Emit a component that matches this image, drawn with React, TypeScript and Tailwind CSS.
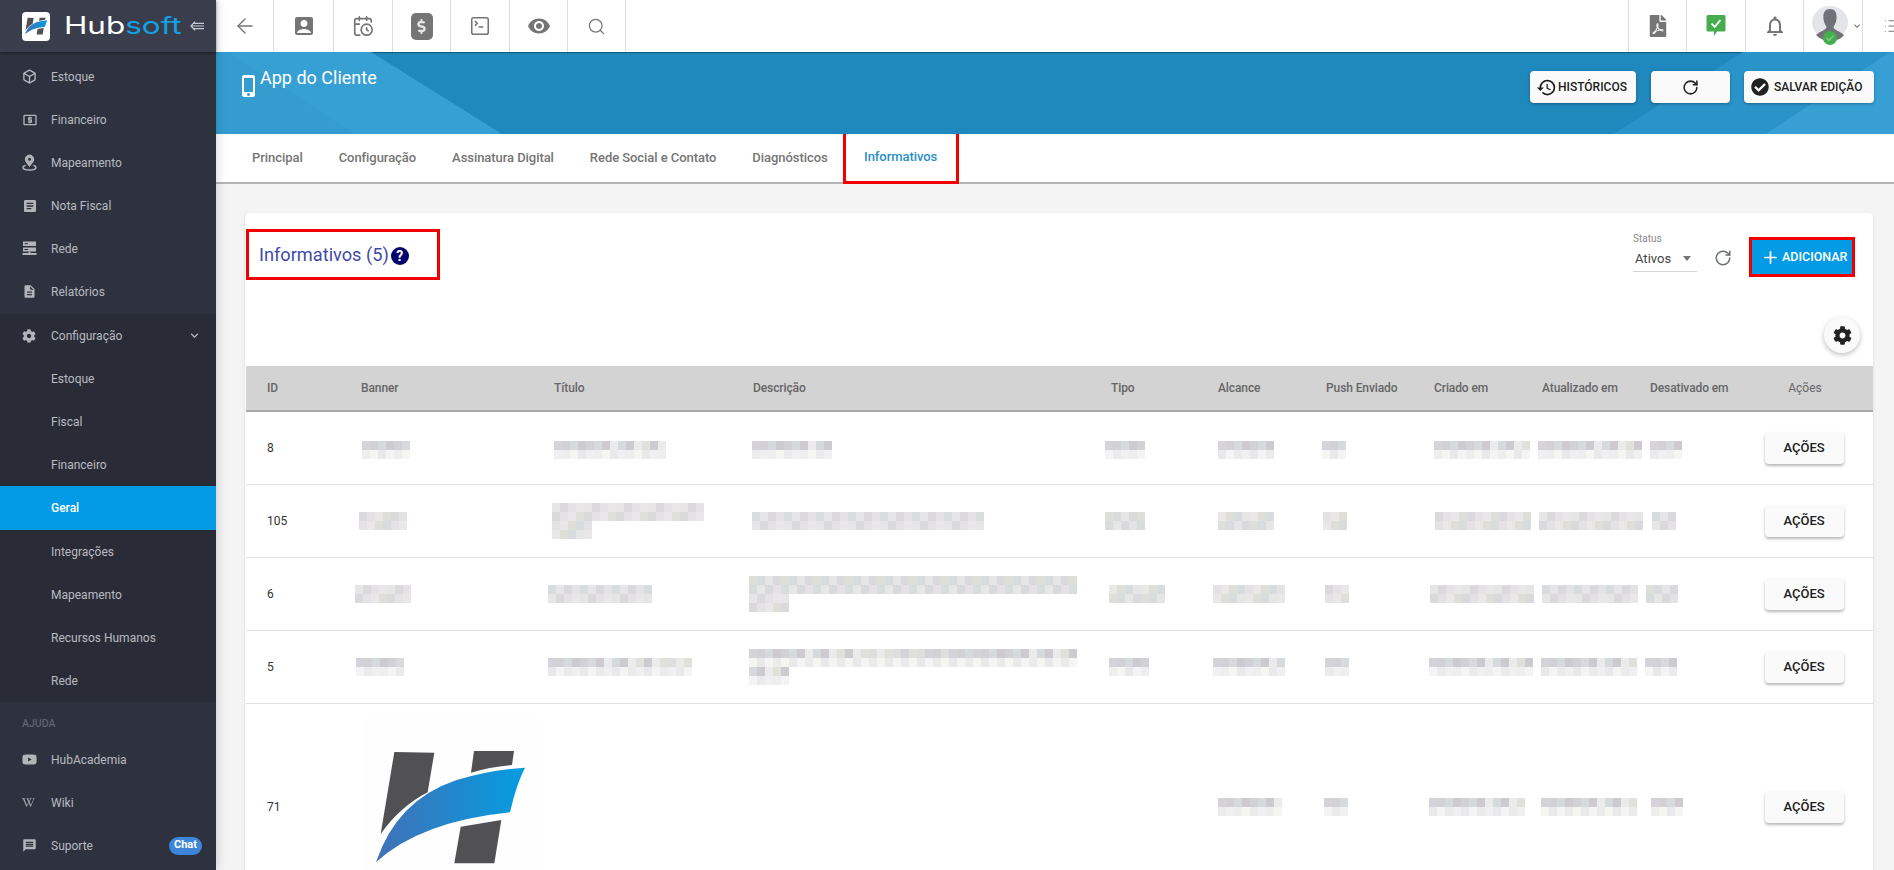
import React from "react";
import {
  MdAccountBox,
  MdArticle,
  MdDescription,
  MdExpandMore,
  MdHistory,
  MdLocalAtm,
  MdMessage,
  MdOutlineNotifications,
  MdPhoneIphone,
  MdVisibility,
} from "react-icons/md";
import { FaCheckCircle, FaCog, FaDollarSign, FaFilePdf, FaWikipediaW, FaYoutube } from "react-icons/fa";
import { ArrowLeft, Box, CalendarClock, List, Plus, RotateCw, Search, SquareTerminal } from "lucide-react";

// --- Data ---

type NavItem = { label: string; icon?: React.ReactNode; badge?: string; active?: boolean };

const iconClass = "text-[15px]";

function PinIcon() {
  return (
    <svg className="h-[17px] w-[15px]" viewBox="0 0 15 17" fill="none" stroke="currentColor">
      <path d="M7.5 1 A4.2 4.2 0 0 1 11.7 5.2 C11.7 8 9 10 7.5 12.5 C6 10 3.3 8 3.3 5.2 A4.2 4.2 0 0 1 7.5 1 Z" fill="currentColor" />
      <circle cx="7.5" cy="5.2" r="1.5" fill="#2e323f" stroke="none" />
      <path d="M3.6 11.2 C1.8 11.8 1 12.6 1 13.5 C1 15 3.8 16 7.5 16 C11.2 16 14 15 14 13.5 C14 12.6 13.2 11.8 11.4 11.2" strokeWidth="1.5" />
    </svg>
  );
}

function ServerIcon() {
  return (
    <svg className="h-[15px] w-[15px]" viewBox="0 0 15 15">
      <path d="M1 0.5 H14 V5 H1 Z M1 6.5 H14 V10.5 H1 Z" fill="currentColor" />
      <path d="M6.5 10.5 H8.5 V12 H14.5 V14 H0.5 V12 H6.5 Z" fill="currentColor" />
      <path d="M2.5 2.7 H6 M2.5 8.5 H6" stroke="#2e323f" strokeWidth="1" />
    </svg>
  );
}

const MAIN_NAV: NavItem[] = [
  { label: "Estoque", icon: <Box className="h-[15px] w-[15px]" strokeWidth={2.2} /> },
  { label: "Financeiro", icon: <MdLocalAtm className="text-[16px]" /> },
  { label: "Mapeamento", icon: <PinIcon /> },
  { label: "Nota Fiscal", icon: <MdArticle className="text-[16px]" /> },
  { label: "Rede", icon: <ServerIcon /> },
  { label: "Relatórios", icon: <MdDescription className={iconClass} /> },
];

const CONFIG_NAV: NavItem[] = [
  { label: "Estoque" },
  { label: "Fiscal" },
  { label: "Financeiro" },
  { label: "Geral", active: true },
  { label: "Integrações" },
  { label: "Mapeamento" },
  { label: "Recursos Humanos" },
  { label: "Rede" },
];

const HELP_NAV: NavItem[] = [
  { label: "HubAcademia", icon: <FaYoutube className="text-[15px]" /> },
  { label: "Wiki", icon: <FaWikipediaW className="text-[13px]" /> },
  { label: "Suporte", icon: <MdMessage className={iconClass} />, badge: "Chat" },
];

const TABS = ["Principal", "Configuração", "Assinatura Digital", "Rede Social e Contato", "Diagnósticos"];

const COLUMNS = [
  { label: "ID", width: "w-[94px]" },
  { label: "Banner", width: "w-[193px]" },
  { label: "Título", width: "w-[199px]" },
  { label: "Descrição", width: "w-[358px]" },
  { label: "Tipo", width: "w-[107px]" },
  { label: "Alcance", width: "w-[108px]" },
  { label: "Push Enviado", width: "w-[108px]" },
  { label: "Criado em", width: "w-[108px]" },
  { label: "Atualizado em", width: "w-[108px]" },
  { label: "Desativado em", width: "w-[108px]" },
];

// where the text of each column starts, the censored blocks are placed from it
const COLUMN_X = [361, 554, 753, 1111, 1218, 1326, 1434, 1542, 1650];

type Block = { x: number; tiers: number[] } | null;
type Row = { id: string; height: string; soft?: boolean; dy?: number; blocks: Block[]; logo?: boolean };

const ROWS: Row[] = [
  {
    id: "8",
    height: "h-[73px]",
    dy: 5,
    blocks: [
      { x: 362, tiers: [48, 48] },
      { x: 554, tiers: [112, 112] },
      { x: 752, tiers: [74, 74] },
      { x: 1105, tiers: [33, 33] },
      { x: 1218, tiers: [56, 56] },
      { x: 1322, tiers: [24, 24] },
      { x: 1434, tiers: [96, 96] },
      { x: 1538, tiers: [103, 103] },
      { x: 1650, tiers: [32, 32] },
    ],
  },
  {
    id: "105",
    height: "h-[73px]",
    soft: true,
    blocks: [
      { x: 359, tiers: [48, 48] },
      { x: 552, tiers: [152, 152, 40, 40] },
      { x: 752, tiers: [232, 232] },
      { x: 1105, tiers: [40, 40] },
      { x: 1218, tiers: [56, 56] },
      { x: 1323, tiers: [24, 24] },
      { x: 1435, tiers: [96, 96] },
      { x: 1539, tiers: [97, 97] },
      { x: 1652, tiers: [24, 24] },
    ],
  },
  {
    id: "6",
    height: "h-[73px]",
    soft: true,
    blocks: [
      { x: 355, tiers: [56, 56] },
      { x: 548, tiers: [104, 104] },
      { x: 749, tiers: [321, 321, 40, 40] },
      { x: 1109, tiers: [56, 56] },
      { x: 1213, tiers: [72, 72] },
      { x: 1325, tiers: [24, 24] },
      { x: 1430, tiers: [104, 104] },
      { x: 1542, tiers: [96, 96] },
      { x: 1646, tiers: [32, 32] },
    ],
  },
  {
    id: "5",
    height: "h-[73px]",
    blocks: [
      { x: 356, tiers: [48, 48] },
      { x: 548, tiers: [144, 144] },
      { x: 749, tiers: [327, 327, 40, 40] },
      { x: 1109, tiers: [40, 40] },
      { x: 1213, tiers: [72, 72] },
      { x: 1325, tiers: [24, 24] },
      { x: 1429, tiers: [104, 104] },
      { x: 1541, tiers: [96, 96] },
      { x: 1645, tiers: [32, 32] },
    ],
  },
  {
    id: "71",
    height: "h-[207px]",
    logo: true,
    blocks: [
      null,
      null,
      null,
      null,
      { x: 1218, tiers: [64, 64] },
      { x: 1324, tiers: [24, 24] },
      { x: 1429, tiers: [96, 96] },
      { x: 1541, tiers: [96, 96] },
      { x: 1651, tiers: [27, 27] },
    ],
  },
];

const DARK_TONES = ["#d5d3d9", "#cdcbd0", "#dedede", "#d7dadd", "#e1e1dc", "#d2d2d6", "#ebebeb"];
const LIGHT_TONES = ["#f0f0f2", "#ebebeb", "#f4f4f4", "#e9e9ec", "#f5f5f2", "#eeeeee"];
const SOFT_TONES = ["#e4e2e4", "#dadadc", "#e6e6e6", "#d9dcdd", "#dfdfda", "#e9e7e8"];

// --- Small pieces ---

function HLogo({ className, viewBox }: { className: string; viewBox: string }) {
  return (
    <svg className={className} viewBox={viewBox}>
      <defs>
        <linearGradient id="hlogo" x1="0" x2="1" y1="0" y2="0">
          <stop offset="0" stopColor="#4270b6" />
          <stop offset="1" stopColor="#049de0" />
        </linearGradient>
      </defs>
      <path d="M163 156 L283 158 L263 277 Q180 320 122 402 Z" fill="#515153" />
      <path d="M402 153 L522 153 L516 195 Q450 200 393 218 Z" fill="#515153" />
      <path d="M362 380 L484 360 L463 490 L343 490 Z" fill="#515153" />
      <path d="M555 203 Q530 250 510 337 Q240 365 108 487 Q170 300 350 240 Q450 210 555 203 Z" fill="url(#hlogo)" />
    </svg>
  );
}

function NavRow({ item, sub }: { item: NavItem; sub?: boolean }) {
  return (
    <div
      className={
        item.active
          ? "flex h-[44px] items-center bg-[#039be5] pl-[51px] text-[12px] font-medium text-white"
          : sub
            ? "flex h-[43px] items-center pl-[51px] text-[12px] text-[#b9bac0]"
            : "flex h-[43px] items-center pr-[14px] pl-[22px] text-[12px] text-[#b9bac0]"
      }
    >
      {item.icon && <span className="flex w-[29px] shrink-0 items-center text-[#b3b4ba]">{item.icon}</span>}
      <span className="flex-1">{item.label}</span>
      {item.badge && (
        <span className="flex h-[18px] w-[33px] items-center justify-center rounded-full bg-[#3d85d8] text-[11px] font-bold text-white">
          {item.badge}
        </span>
      )}
    </div>
  );
}

function Sidebar() {
  return (
    <aside className="z-10 flex w-[216px] shrink-0 flex-col bg-[#2e323f] shadow-[2px_0_8px_rgba(0,0,0,0.14)]">
      <div className="flex h-[52px] shrink-0 items-center bg-[#3a3e4c] pl-[22px] shadow-[0_1px_3px_rgba(0,0,0,0.4)]">
        <div className="flex h-[29px] w-[28px] items-center justify-center rounded-[4px] bg-white">
          <HLogo className="h-[24px] w-[24px]" viewBox="90 135 480 370" />
        </div>
        <span className="ml-[14px] block w-[118px] origin-left scale-x-[1.31] text-[24px] leading-none whitespace-nowrap [font-family:Inter,sans-serif]">
          <span className="text-white">Hub</span>
          <span className="text-[#12a0e6]">soft</span>
        </span>
        <svg className="ml-[8px] h-[10px] w-[14px]" viewBox="0 0 14 10" fill="none" stroke="#c8c9ce" strokeWidth="1.2">
          <path d="M5 0.7 L1 5 L5 9.3 M1.5 5 H14 M3.7 2.4 H14 M3.7 7.6 H14" />
        </svg>
      </div>
      <nav className="flex-1 pt-[3px]">
        {MAIN_NAV.map((item) => (
          <NavRow key={item.label} item={item} />
        ))}
        <div className="mt-px bg-[#292c37]">
          <div className="flex h-[43px] items-center pr-[14px] pl-[22px] text-[12px] text-[#b9bac0]">
            <span className="flex w-[29px] items-center text-[#b3b4ba]">
              <FaCog className="text-[14px]" />
            </span>
            <span className="flex-1">Configuração</span>
            <MdExpandMore className="text-[15px]" />
          </div>
          {CONFIG_NAV.map((item) => (
            <NavRow key={item.label} item={item} sub />
          ))}
        </div>
        <div className="flex h-[36px] items-center pt-[7px] pl-[22px] text-[10.5px] font-medium text-[#5f636f]">AJUDA</div>
        {HELP_NAV.map((item) => (
          <NavRow key={item.label} item={item} />
        ))}
      </nav>
    </aside>
  );
}

function TopCell({ children, className }: { children: React.ReactNode; className: string }) {
  return (
    <div className={"flex h-full shrink-0 items-center justify-center border-[#dedede] text-[#757575] " + className}>
      {children}
    </div>
  );
}

function Avatar() {
  return (
    <svg className="h-[40px] w-[37px] shrink-0" viewBox="0 0 37 40">
      <ellipse cx="18" cy="16.5" rx="18" ry="16.5" fill="#e4e5e9" />
      <path
        d="M18 3 C12 3 11 8 11.5 13 C12 17 13.5 19 14.5 21 C14.5 24 8 25 4 29 C8 33 13 35 18 35 C24 35 29 33 32 29 C28 25 21.5 24 21.5 21 C22.5 19 24 17 24.5 13 C25 8 24 3 18 3 Z"
        fill="#6f7278"
      />
      <circle cx="18" cy="32" r="7" fill="#46ad4f" />
      <path d="M14.5 32 L17 34.5 L21.5 29.5" fill="none" stroke="#7dd183" strokeWidth="1.3" />
    </svg>
  );
}

function TopBar() {
  return (
    <header className="flex h-[52px] shrink-0 items-center overflow-hidden bg-white">
      <TopCell className="w-[58px] border-r">
        <ArrowLeft className="h-[24px] w-[24px]" strokeWidth={1.4} />
      </TopCell>
      <TopCell className="w-[60px] border-r">
        <MdAccountBox className="text-[24px]" />
      </TopCell>
      <TopCell className="w-[59px] border-r">
        <CalendarClock className="h-[22px] w-[22px]" strokeWidth={1.8} />
      </TopCell>
      <TopCell className="w-[58px] border-r">
        <span className="flex h-[27px] w-[22px] items-center justify-center rounded-[5px] bg-[#757575] text-[#e8e8e8]">
          <FaDollarSign className="text-[15px]" />
        </span>
      </TopCell>
      <TopCell className="w-[59px] border-r">
        <SquareTerminal className="h-[22px] w-[22px]" strokeWidth={1.7} />
      </TopCell>
      <TopCell className="w-[58px] border-r">
        <MdVisibility className="text-[24px]" />
      </TopCell>
      <TopCell className="w-[58px] border-r">
        <Search className="h-[19px] w-[19px]" strokeWidth={1.6} />
      </TopCell>
      <div className="flex-1" />
      <TopCell className="w-[59px] border-x">
        <FaFilePdf className="text-[22px]" />
      </TopCell>
      <TopCell className="w-[59px] border-r">
        <svg className="h-[24px] w-[20px]" viewBox="0 0 20 24">
          <path d="M2 1 H18 A1.5 1.5 0 0 1 19.5 2.5 V16 A1.5 1.5 0 0 1 18 17.5 H11 L8 22 V17.5 H2 A1.5 1.5 0 0 1 0.5 16 V2.5 A1.5 1.5 0 0 1 2 1 Z" fill="#46ad4f" />
          <path d="M5.5 9.5 L8.8 12.8 L14.5 6" fill="none" stroke="#fff" strokeWidth="1.8" />
        </svg>
      </TopCell>
      <TopCell className="w-[58px] border-r">
        <MdOutlineNotifications className="text-[24px]" />
      </TopCell>
      <TopCell className="w-[59px] justify-start gap-[2px] border-r pl-[8px]">
        <Avatar />
        <MdExpandMore className="shrink-0 text-[12px]" />
      </TopCell>
      <TopCell className="w-[31px] justify-start pl-[20px]">
        <List className="h-[18px] w-[18px] shrink-0" strokeWidth={1.6} />
      </TopCell>
    </header>
  );
}

function WhiteButton({ children, className }: { children: React.ReactNode; className: string }) {
  return (
    <button className={"flex h-[32px] items-center rounded-[4px] bg-[#fafafa] text-[12px] font-medium text-[#212121] shadow-[0_1px_3px_rgba(0,0,0,0.3)] " + className}>
      {children}
    </button>
  );
}

function Banner() {
  return (
    <section className="relative flex h-[82px] shrink-0 items-start justify-between bg-[#1f88bc] pt-[19px] pr-[20px] pl-[26px] shadow-[inset_0_1px_1px_rgba(0,40,70,0.5)]">
      <svg className="absolute inset-0 h-full w-full" viewBox="0 0 1678 82" preserveAspectRatio="none">
        <path d="M0 0 H155 L286 82 H0 Z" fill="#36a0d4" />
        <path d="M0 0 H12 L139 82 H0 Z" fill="#349ccf" />
        <path d="M1527 0 H1674 L1549 82 H1397 Z" fill="#2a93c9" />
        <path d="M1674 0 H1678 V82 H1549 Z" fill="#379fd3" />
      </svg>
      <h1 className="relative flex items-center text-[18px] leading-none text-white">
        <MdPhoneIphone className="mt-[3px] -ml-[5px] h-[24px] w-[24px] shrink-0" />
        <span className="-mt-[13px] -ml-[1px]">App do Cliente</span>
      </h1>
      <div className="relative flex">
        <WhiteButton className="w-[106px] gap-px pl-[6px]">
          <MdHistory className="shrink-0 text-[21px]" />
          HISTÓRICOS
        </WhiteButton>
        <WhiteButton className="ml-[15px] w-[79px] justify-center">
          <RotateCw className="h-[17px] w-[17px]" strokeWidth={2.2} />
        </WhiteButton>
        <WhiteButton className="ml-[14px] w-[130px] gap-[5px] pl-[7px] text-[12.5px]">
          <FaCheckCircle className="shrink-0 text-[18px]" />
          SALVAR EDIÇÃO
        </WhiteButton>
      </div>
    </section>
  );
}

function Tabs() {
  return (
    <nav className="flex h-[50px] shrink-0 items-stretch border-b-2 border-[#b5b5b5] bg-white pl-[18px] text-[13px] font-medium tracking-[-0.06px] text-[#757575]">
      {TABS.map((tab) => (
        <div key={tab} className="flex items-center px-[18px]">
          {tab}
        </div>
      ))}
      <div className="-mt-[4px] -mb-[2px] ml-[-3px] flex w-[116px] items-center justify-center border-[3px] border-[#f20000] text-[#2b8fc9]">
        Informativos
      </div>
    </nav>
  );
}

// censored cells of the reference, drawn as a mosaic
function Mosaic({ block, colX, seed, soft, dy }: { block: NonNullable<Block>; colX: number; seed: number; soft?: boolean; dy?: number }) {
  return (
    <div style={{ marginLeft: block.x - colX, marginTop: dy ?? 0 }}>
      {block.tiers.map((width, tier) => {
        const tones = soft ? SOFT_TONES : tier % 2 === 0 ? DARK_TONES : LIGHT_TONES;
        return (
          <div key={tier} className="flex h-[9px]" style={{ width }}>
            {Array.from({ length: Math.ceil(width / 8) }).map((_, i) => (
              <div
                key={i}
                className="h-full w-[8px] shrink-0"
                style={{ backgroundColor: tones[(i * 3 + (i % 4) * 2 + tier * 5 + seed * 7) % tones.length] }}
              />
            ))}
          </div>
        );
      })}
    </div>
  );
}

function DataTable() {
  return (
    <table className="w-[1627px] table-fixed text-[12px] text-[#333]">
      <colgroup>
        {COLUMNS.map((c) => (
          <col key={c.label} className={c.width} />
        ))}
        <col className="w-[136px]" />
      </colgroup>
      <thead>
        <tr className="h-[45px] border-b-2 border-[#a8a8a8] bg-[#d3d3d3] text-[#666]">
          {COLUMNS.map((c) => (
            <th key={c.label} className="pl-[21px] text-left font-medium tracking-[-0.1px] whitespace-nowrap">
              {c.label}
            </th>
          ))}
          <th className="text-center font-normal">Ações</th>
        </tr>
      </thead>
      <tbody>
        {ROWS.map((row, r) => (
          <tr key={row.id} className={row.height + " border-b border-[#e0e0e0]"}>
            <td className="pl-[21px]">{row.id}</td>
            {row.blocks.map((block, c) => (
              <td key={c} className="pl-[21px] whitespace-nowrap">
                {row.logo && c === 0 && (
                  <div className="ml-px h-[177px] w-[177px] bg-[#fefefe]">
                    <HLogo className="h-full w-full" viewBox="66 54 531 531" />
                  </div>
                )}
                {block && <Mosaic block={block} colX={COLUMN_X[c]} seed={r + c} soft={row.soft} dy={row.dy} />}
              </td>
            ))}
            <td className="pr-[2px] text-center">
              <button className="h-[32px] w-[79px] rounded-[4px] bg-[#fafafa] text-[13px] font-medium text-[#212121] shadow-[0_2px_3px_rgba(0,0,0,0.28)]">
                AÇÕES
              </button>
            </td>
          </tr>
        ))}
      </tbody>
    </table>
  );
}

function Card() {
  return (
    <section className="ml-[29px] w-[1628px] rounded-[4px] bg-white shadow-[0_1px_3px_rgba(0,0,0,0.12)]">
      <div className="flex h-[104px] items-start justify-between pt-[16px] pr-[18px] pl-px">
        <div className="flex h-[51px] w-[194px] items-center gap-[2px] border-[3px] border-[#f20000] pl-[10px]">
          <h2 className="text-[18.2px] text-[#3f4aa8]">Informativos (5)</h2>
          <span className="mt-[3px] flex h-[18px] w-[18px] items-center justify-center rounded-full bg-[#00006e] text-[14px] leading-none font-bold text-white">
            ?
          </span>
        </div>
        <div className="flex items-start">
          <div className="mt-[4px] w-[64px] border-b border-[#d4d4d4] pb-[4px]">
            <div className="text-[10px] leading-[12px] text-[#8a8a8a]">Status</div>
            <div className="mt-[5px] flex items-center justify-between pr-[6px] pl-[2px] text-[13px] leading-[17px] text-[#444]">
              Ativos
              <span className="h-0 w-0 border-x-[4px] border-t-[5px] border-x-transparent border-t-[#757575]" />
            </div>
          </div>
          <RotateCw className="mt-[20px] ml-[17px] h-[18px] w-[18px] text-[#6a7075]" strokeWidth={2} />
          <div className="mt-[8px] ml-[17px] border-[3px] border-[#f20000]">
            <button className="flex h-[34px] w-[100px] items-center gap-[2px] bg-[#039be5] pl-[9px] text-[12.5px] font-medium text-white">
              <Plus className="h-[19px] w-[19px] shrink-0" strokeWidth={2.2} />
              ADICIONAR
            </button>
          </div>
        </div>
      </div>
      <div className="flex h-[49px] items-start justify-end pr-[13px]">
        <div className="flex h-[36px] w-[36px] items-center justify-center rounded-full bg-[#fafafa] text-[#212121] shadow-[0_2px_5px_rgba(0,0,0,0.25)]">
          <FaCog className="text-[19px]" />
        </div>
      </div>
      <div className="pl-px">
        <DataTable />
      </div>
    </section>
  );
}

export default function App() {
  return (
    <div className="flex h-screen w-full overflow-hidden bg-[#f4f4f4] [font-family:Roboto,sans-serif]">
      <Sidebar />
      <div className="flex min-w-0 flex-1 flex-col overflow-hidden">
        <TopBar />
        <Banner />
        <Tabs />
        <main className="flex-1 overflow-hidden pt-[29px]">
          <Card />
        </main>
      </div>
    </div>
  );
}
